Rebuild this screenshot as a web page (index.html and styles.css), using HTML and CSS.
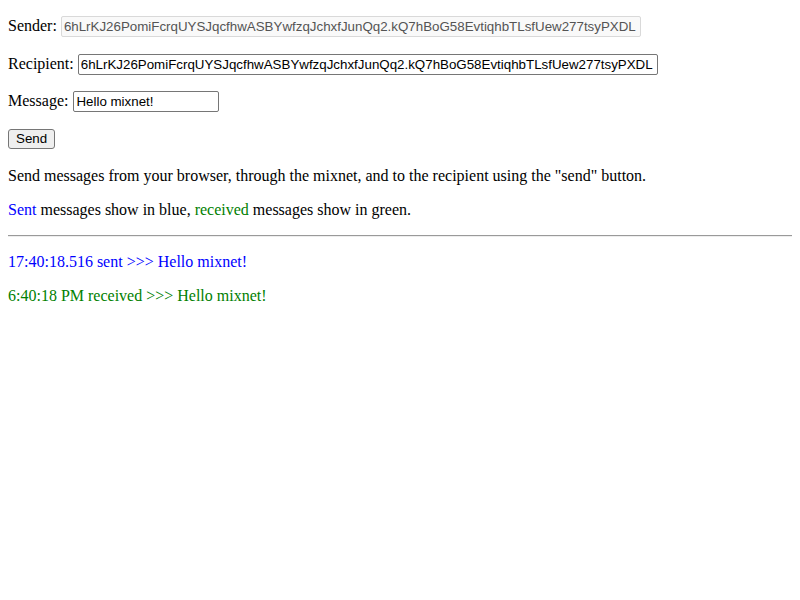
FILE: index.html
```html
<!DOCTYPE html>
<html>
<head>
<meta charset="utf-8">
<link rel="stylesheet" href="styles.css">
</head>
<body>
<p class="row row-first">Sender: <input class="field field-addr field-disabled" type="text" value="6hLrKJ26PomiFcrqUYSJqcfhwASBYwfzqJchxfJunQq2.kQ7hBoG58EvtiqhbTLsfUew277tsyPXDL" disabled></p>
<p class="row">Recipient: <input class="field field-addr" type="text" value="6hLrKJ26PomiFcrqUYSJqcfhwASBYwfzqJchxfJunQq2.kQ7hBoG58EvtiqhbTLsfUew277tsyPXDL"></p>
<p class="row">Message: <input class="field field-msg" type="text" value="Hello mixnet!"></p>
<p class="btn-row"><button class="btn">Send</button></p>
<p>Send messages from your browser, through the mixnet, and to the recipient using the "send" button.</p>
<p><span class="sent">Sent</span> messages show in blue, <span class="received">received</span> messages show in green.</p>
<hr class="rule">
<div class="log">
<p class="sent">17:40:18.516 sent &gt;&gt;&gt; Hello mixnet!</p>
<p class="received">6:40:18 PM received &gt;&gt;&gt; Hello mixnet!</p>
</div>
</body>
</html>
```
FILE: styles.css
```css
html, body {
  font-family: "Liberation Serif", "Times New Roman", serif;
  font-size: 16px;
  color: #000;
  background: #fff;
}
body {
  margin: 0;
  padding: 16px 8px 8px;
}
p {
  margin: 16px 0;
  line-height: 18px;
}
.row {
  height: 21.67px;
}
.row-first {
  margin-top: 0;
}
.btn-row {
  height: 22.5px;
}
.field {
  font-family: "Liberation Sans", Arial, sans-serif;
  font-size: 13.333px;
  height: 21px;
  box-sizing: border-box;
  padding: 1px 2px;
  border: 1px solid #767676;
  border-radius: 2px;
  vertical-align: baseline;
  margin: 0;
  color: #000;
  background: #fff;
}
.field-addr {
  width: 580px;
}
.field-msg {
  width: 146px;
  margin-left: 1px;
}
.field-disabled {
  background: #f9f9f9;
  color: #545454;
  border-color: #d9d9d9;
}
.btn {
  font-family: "Liberation Sans", Arial, sans-serif;
  font-size: 13.333px;
  height: 20px;
  padding: 1px 7px;
  border: 1px solid #767676;
  border-radius: 3px;
  background: #efefef;
  color: #000;
  margin: 0;
}
.sent {
  color: #0000ff;
}
.received {
  color: #008000;
}
.rule {
  margin: 8px 0;
  border: none;
  border-top: 1px solid #9a9a9a;
  border-bottom: 1px solid #eeeeee;
}
```
